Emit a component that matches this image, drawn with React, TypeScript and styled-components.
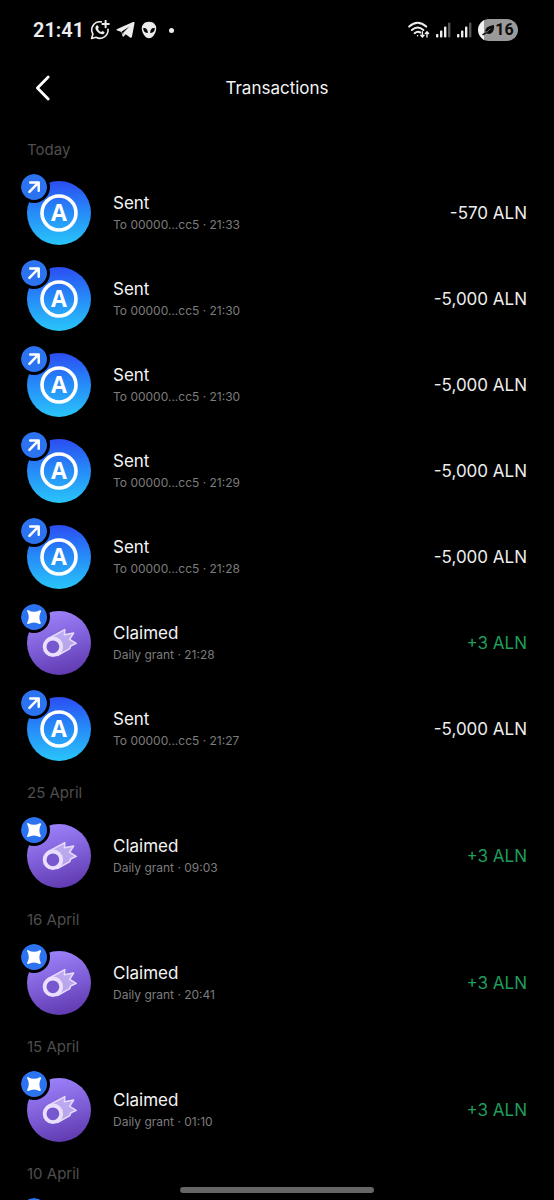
import React from "react";
import styled, { createGlobalStyle } from "styled-components";

const GlobalStyle = createGlobalStyle`
  * { box-sizing: border-box; }
  body { margin: 0; background: #000; }
`;

const Screen = styled.div`
  position: relative;
  display: flex;
  flex-direction: column;
  height: 100vh;
  overflow: hidden;
  background: #000;
  color: #f4f4f4;
  font-family: Inter, "Liberation Sans", sans-serif;
`;

const StatusBar = styled.div`
  flex: none;
  display: flex;
  align-items: center;
  justify-content: space-between;
  height: 60px;
  padding: 0 36px 0 33px;
`;

const StatusGroup = styled.div`
  display: flex;
  align-items: center;
  gap: 6px;
  svg { display: block; }
`;

const Clock = styled.span`
  font-family: Roboto, sans-serif;
  font-size: 20px;
  line-height: 24px;
  font-weight: 600;
  color: #ededed;
`;

const Dot = styled.span`
  width: 5px;
  height: 5px;
  margin-left: 6px;
  border-radius: 50%;
  background: #ededed;
`;

const Battery = styled.div`
  display: flex;
  align-items: center;
  justify-content: center;
  width: 40px;
  height: 22px;
  border-radius: 11px;
  background: linear-gradient(90deg, #f4f4f4 6px, #9a9a9a 6px);
  color: #0c0c0c;
  font-family: Roboto, sans-serif;
  font-size: 16px;
  line-height: 22px;
  font-weight: 700;
`;

const Header = styled.header`
  flex: none;
  display: grid;
  grid-template-columns: 48px 1fr 48px;
  align-items: center;
  height: 56px;
  padding: 0 19px;
`;

const BackButton = styled.button`
  display: flex;
  align-items: center;
  justify-content: center;
  height: 48px;
  padding: 0;
  border: 0;
  background: none;
  color: #fff;
  cursor: pointer;
`;

const Title = styled.h1`
  margin: 0;
  text-align: center;
  font-size: 17px;
  line-height: 24px;
  font-weight: 400;
`;

const Feed = styled.main`
  flex: 1;
  min-height: 0;
  overflow-y: auto;
  scrollbar-width: none;
  padding: 13px 27px 0;
`;

const DayLabel = styled.h2`
  margin: 0;
  padding-top: 9px;
  height: 41px;
  font-size: 15px;
  line-height: 24px;
  font-weight: 400;
  color: #4e4e4e;
`;

const List = styled.ul`
  margin: 0;
  padding: 0;
  list-style: none;
`;

const Row = styled.li`
  display: flex;
  align-items: center;
  gap: 22px;
  height: 86px;
`;

const Avatar = styled.div<{ $kind: Kind }>`
  position: relative;
  flex: none;
  width: 64px;
  height: 64px;
  border-radius: 50%;
  background: ${(p) =>
    p.$kind === "sent"
      ? "linear-gradient(180deg, #2b4df2 0%, #268cf8 50%, #29c6fa 100%)"
      : "linear-gradient(165deg, #9b80f8 10%, #7f5fd8 50%, #5a32a8 100%)"};
  svg { display: block; }
`;

const Badge = styled.span`
  position: absolute;
  top: -10px;
  left: -9px;
  width: 32px;
  height: 32px;
  border: 3px solid #000;
  border-radius: 50%;
  background: #2c73f2;
  background-clip: padding-box;
`;

const Details = styled.div`
  flex: 1;
  min-width: 0;
`;

const Name = styled.div`
  font-size: 17px;
  line-height: 24px;
`;

const Note = styled.div`
  font-size: 12px;
  line-height: 20px;
  color: #7c7c7c;
`;

const Amount = styled.div<{ $positive: boolean }>`
  font-size: 17px;
  line-height: 24px;
  white-space: nowrap;
  color: ${(p) => (p.$positive ? "#1f9d5b" : "#ededed")};
`;

const HomeBar = styled.div`
  position: absolute;
  bottom: 7px;
  left: 50%;
  width: 35%;
  height: 6px;
  transform: translateX(-50%);
  border-radius: 3px;
  background: #666;
`;

type Kind = "sent" | "claimed";
type Transaction = { kind: Kind; note?: string; amount?: string };
type Day = { label: string; items: Transaction[] };

const sent = (time: string, amount = "-5,000 ALN"): Transaction => ({
  kind: "sent",
  note: `To 00000...cc5 · ${time}`,
  amount,
});
const claimed = (time: string): Transaction => ({
  kind: "claimed",
  note: `Daily grant · ${time}`,
  amount: "+3 ALN",
});

const days: Day[] = [
  {
    label: "Today",
    items: [
      sent("21:33", "-570 ALN"),
      sent("21:30"),
      sent("21:30"),
      sent("21:29"),
      sent("21:28"),
      claimed("21:28"),
      sent("21:27"),
    ],
  },
  { label: "25 April", items: [claimed("09:03")] },
  { label: "16 April", items: [claimed("20:41")] },
  { label: "15 April", items: [claimed("01:10")] },
  { label: "10 April", items: [{ kind: "claimed" }] },
];

const CoinIcon = () => (
  <svg width="64" height="64" viewBox="0 0 64 64" aria-hidden="true">
    <circle cx="32" cy="32" r="17" fill="none" stroke="#fff" strokeWidth="3.6" />
    <text x="32" y="40" textAnchor="middle" fontFamily="'Open Sans', sans-serif" fontWeight="700" fontSize="23" fill="#fff">
      A
    </text>
  </svg>
);

const CometIcon = () => (
  <svg width="64" height="64" viewBox="0 0 64 64" aria-hidden="true">
    <path
      d="M20.5 28 L37.8 18.6 L37.4 23.7 L46.6 22 L42.6 28.3 L49.2 32.4 L43.6 35 L42.8 37.6 L30.5 44.5 L33 34 Z"
      fill="#d3c4f6"
      fillOpacity="0.72"
      stroke="#e6dcfb"
      strokeWidth="1.5"
      strokeLinejoin="round"
    />
    <circle cx="25.9" cy="35.8" r="8.3" fill="#7858cf" stroke="#eadffc" strokeWidth="3.8" />
  </svg>
);

const SendArrow = () => (
  <svg width="26" height="26" viewBox="0 0 26 26" fill="none" stroke="#fff" strokeWidth="2.5" strokeLinecap="round" strokeLinejoin="round" aria-hidden="true">
    <path d="M8.4 17.8 L17.4 8.6 M9.2 8.4 H17.7 V16.8" />
  </svg>
);

const Sparkle = () => (
  <svg width="26" height="26" viewBox="0 0 26 26" fill="#fff" aria-hidden="true">
    <path d="M6.8 6 Q13 9.6 18.8 6.2 Q20.4 6 20 7.4 Q16.8 13 19.8 18.8 Q19.8 20.4 18.6 20 Q13 17 7.2 20 Q5.8 20.4 6.2 18.8 Q9.4 13 6.2 7.2 Q5.8 5.8 6.8 6 Z" />
  </svg>
);

const ChatIcon = () => (
  <svg width="20" height="20" viewBox="0 0 20 20" fill="none" stroke="#ededed" strokeWidth="1.6" strokeLinecap="round" aria-hidden="true">
    <path d="M11.3 1.9 A8.1 8.1 0 0 0 2.9 14 L1.6 18.5 L6 17.2 A8.1 8.1 0 0 0 18 9.3" strokeLinejoin="round" />
    <path d="M15.6 0.9 V7.3 M12.4 4.1 H18.8" strokeWidth="2" />
    <path
      d="M6.3 5.7 C7.4 4.8 7.9 5.2 8.8 7.4 L8 8.9 C8.8 10.4 9.8 11.4 11.2 12 L12.6 10.9 C14.8 11.9 15 12.4 14.1 13.5 C12.5 15.2 9.7 14.1 7.7 12.1 C5.6 10 4.6 7.3 6.3 5.7 Z"
      fill="#ededed"
      stroke="none"
    />
  </svg>
);

const PlaneIcon = () => (
  <svg width="19" height="18" viewBox="0 0 19 18" fill="#ededed" aria-hidden="true">
    <path d="M0.6 9.2 Q0 8.5 1.2 7.9 L17 1.1 Q18.8 0.5 18.5 2.3 L16 15.5 Q15.5 17.4 14 16.4 L9.8 13.2 L7.6 15.5 Q6.8 16.2 6.5 15 L5.5 11 Z" />
    <path d="M5.8 10.6 L13.4 5.4 L7.4 11.6 L7.1 14" fill="#000" />
  </svg>
);

const AlienIcon = () => (
  <svg width="16" height="18" viewBox="0 0 16 18" aria-hidden="true">
    <path d="M8 0.8 C12.6 0.8 15.2 3.7 15.2 7.5 C15.2 12 11.5 17.3 8 17.3 C4.5 17.3 0.8 12 0.8 7.5 C0.8 3.7 3.4 0.8 8 0.8 Z" fill="#ededed" />
    <path d="M2.2 7.1 C5 6.4 7 8.6 6.8 12 C4 12.4 2.1 10.3 2.2 7.1 Z M13.8 7.1 C11 6.4 9 8.6 9.2 12 C12 12.4 13.9 10.3 13.8 7.1 Z" fill="#080808" />
  </svg>
);

const WifiIcon = () => (
  <svg width="22" height="18" viewBox="0 0 22 18" fill="none" stroke="#ededed" strokeWidth="2" strokeLinecap="round" aria-hidden="true">
    <path d="M1.2 5.6 Q9.6 -2 18.2 5.6" />
    <path d="M3.9 9 Q9.6 4 15.4 9" />
    <path d="M6.6 12.2 Q9.6 9.7 12.2 11.4" />
    <circle cx="9.6" cy="14.8" r="0.8" fill="#ededed" stroke="none" />
    <path d="M14.4 10.8 V15.6 M12.8 14.2 L14.4 16 L16 14.2 M19 16 V11 M17.4 12.5 L19 10.7 L20.6 12.5" strokeWidth="1.4" />
  </svg>
);

const SignalIcon = () => (
  <svg width="15" height="16" viewBox="0 0 15 16" fill="#ededed" aria-hidden="true">
    <rect x="0" y="12" width="2.4" height="3.5" rx="0.8" />
    <rect x="4" y="8.6" width="2.4" height="6.9" rx="0.8" />
    <rect x="8" y="4.6" width="2.4" height="10.9" rx="0.8" />
    <rect x="12" y="0.6" width="2.4" height="14.9" rx="0.8" fill="#555" />
  </svg>
);

const LeafIcon = () => (
  <svg width="13" height="12" viewBox="0 0 12 12" aria-hidden="true">
    <path d="M11.5 1 C12 7 9.5 10.5 5.4 9.8 L3.5 9 C1.6 5.5 4 2 11.5 1 Z" fill="#0c0c0c" />
    <path d="M0.6 10.6 Q4 9.6 7.4 5.2" fill="none" stroke="#0c0c0c" strokeWidth="1.6" strokeLinecap="round" />
    <path d="M3.2 8.6 Q5.6 7.3 7.6 4.8" fill="none" stroke="#9a9a9a" strokeWidth="0.7" />
  </svg>
);

const TransactionRow = ({ kind, note, amount }: Transaction) => (
  <Row>
    <Avatar $kind={kind}>
      {kind === "sent" ? <CoinIcon /> : <CometIcon />}
      <Badge>{kind === "sent" ? <SendArrow /> : <Sparkle />}</Badge>
    </Avatar>
    {note && (
      <Details>
        <Name>{kind === "sent" ? "Sent" : "Claimed"}</Name>
        <Note>{note}</Note>
      </Details>
    )}
    {amount && <Amount $positive={kind === "claimed"}>{amount}</Amount>}
  </Row>
);

export default function App() {
  return (
    <Screen>
      <GlobalStyle />
      <StatusBar>
        <StatusGroup>
          <Clock>21:41</Clock>
          <ChatIcon />
          <PlaneIcon />
          <AlienIcon />
          <Dot />
        </StatusGroup>
        <StatusGroup>
          <WifiIcon />
          <SignalIcon />
          <SignalIcon />
          <Battery>
            <LeafIcon />
            16
          </Battery>
        </StatusGroup>
      </StatusBar>
      <Header>
        <BackButton type="button" aria-label="Back">
          <svg width="16" height="26" viewBox="0 0 16 26" fill="none" stroke="currentColor" strokeWidth="2.8" strokeLinecap="round" strokeLinejoin="round" aria-hidden="true">
            <path d="M13.2 2 L2.4 13 L13.2 24" />
          </svg>
        </BackButton>
        <Title>Transactions</Title>
      </Header>
      <Feed>
        {days.map((day) => (
          <section key={day.label}>
            <DayLabel>{day.label}</DayLabel>
            <List>
              {day.items.map((item, i) => (
                <TransactionRow key={i} {...item} />
              ))}
            </List>
          </section>
        ))}
      </Feed>
      <HomeBar />
    </Screen>
  );
}
